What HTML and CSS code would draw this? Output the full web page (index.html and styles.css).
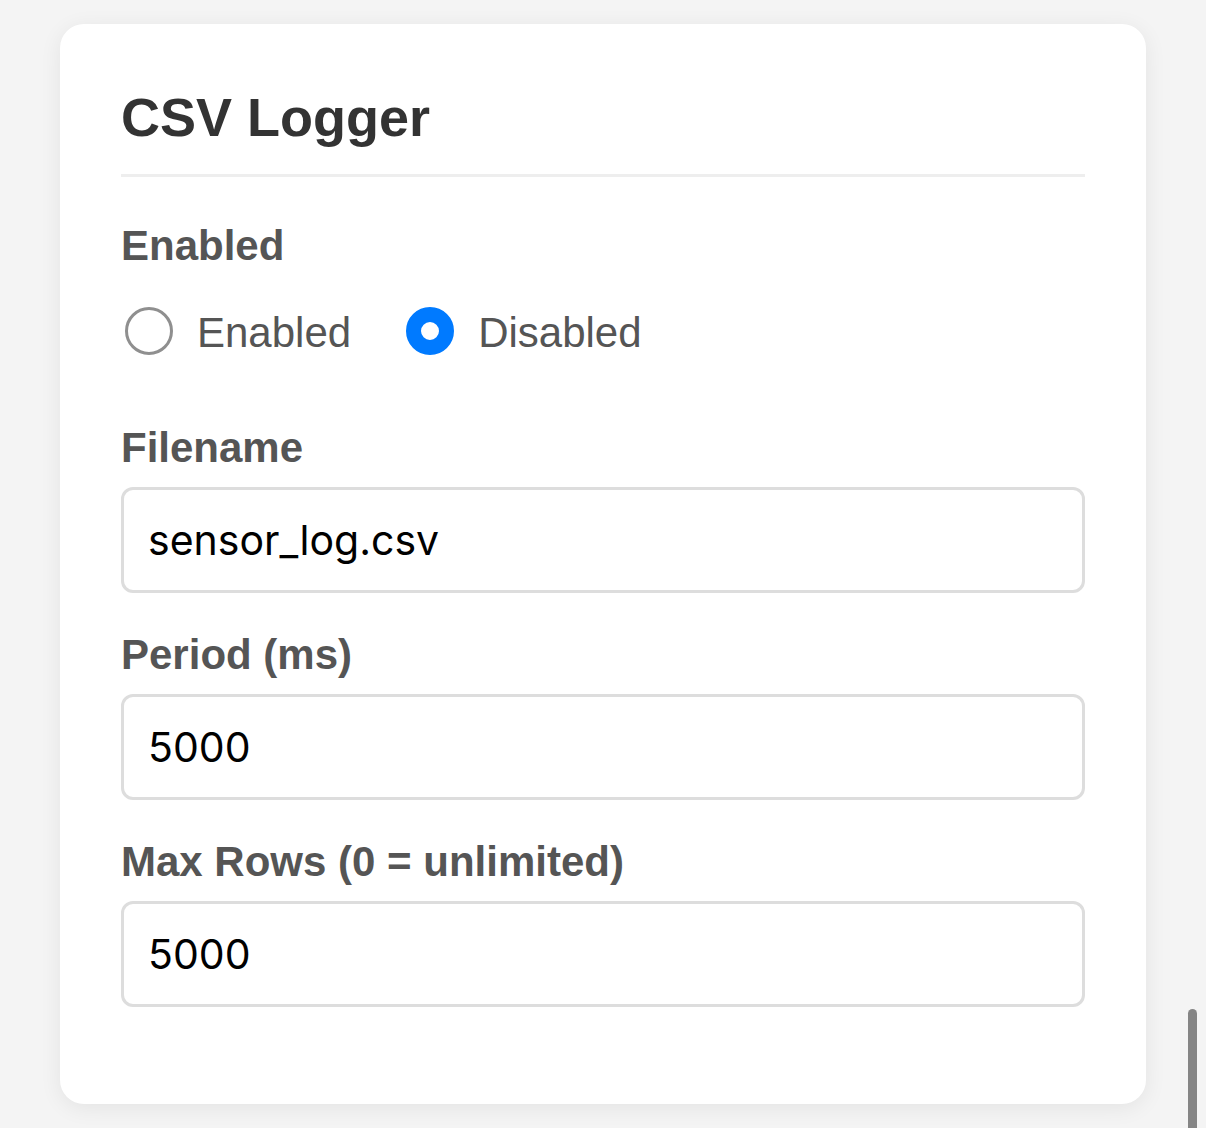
FILE: index.html
```html
<!DOCTYPE html>
<html lang="en">
<head>
<meta charset="utf-8">
<title>CSV Logger</title>
<link rel="stylesheet" href="styles.css">
</head>
<body>
<main class="card">
  <h2 class="card-title">CSV Logger</h2>

  <div class="field field-radio">
    <div class="field-label">Enabled</div>
    <div class="radio-row">
      <label class="radio-item">
        <input type="radio" name="enabled" class="radio" value="1">
        <span class="radio-text">Enabled</span>
      </label>
      <label class="radio-item">
        <input type="radio" name="enabled" class="radio" value="0" checked>
        <span class="radio-text">Disabled</span>
      </label>
    </div>
  </div>

  <div class="field">
    <label class="field-label" for="filename">Filename</label>
    <input class="text-input" id="filename" type="text" value="sensor_log.csv">
  </div>

  <div class="field">
    <label class="field-label" for="period">Period (ms)</label>
    <input class="text-input" id="period" type="text" value="5000">
  </div>

  <div class="field">
    <label class="field-label" for="maxrows">Max Rows (0 = unlimited)</label>
    <input class="text-input" id="maxrows" type="text" value="5000">
  </div>
</main>
<div class="scroll-indicator"></div>
</body>
</html>
```

FILE: styles.css
```css
html, body {
  margin: 0;
  padding: 0;
}

body {
  background: #f4f4f4;
  font-family: "Liberation Sans", Arial, sans-serif;
  overflow: hidden;
  height: 1128px;
}

.card {
  margin: 24px 60px 0;
  box-sizing: border-box;
  height: 1080px;
  padding: 61px 61px 0;
  background: #ffffff;
  border-radius: 24px;
  box-shadow: 0 4px 22px rgba(0, 0, 0, 0.07);
}

.card-title {
  margin: 0;
  font-size: 54px;
  line-height: 64px;
  font-weight: 700;
  color: #333333;
  padding-bottom: 25px;
  border-bottom: 3px solid #eeeeee;
}

.field {
  display: flex;
  flex-direction: column;
  margin-top: 38px;
}

.field-radio {
  margin-top: 45px;
  padding-bottom: 29px;
}

.field-label {
  display: block;
  font-size: 42px;
  line-height: 48px;
  font-weight: 700;
  color: #555555;
  margin-bottom: 15px;
}

.field-radio .field-label {
  margin-bottom: 39px;
}

.radio-row {
  display: flex;
  align-items: flex-start;
  gap: 51px;
}

.radio-item {
  display: flex;
  align-items: flex-start;
  gap: 24px;
}

.radio {
  appearance: none;
  -webkit-appearance: none;
  box-sizing: border-box;
  width: 48px;
  height: 48px;
  margin: -2px 0 0 4px;
  border-radius: 50%;
  border: 3px solid #8f8f8f;
  background: #ffffff;
}

.radio:checked {
  border: 15px solid #007aff;
}

.radio-text {
  font-size: 42px;
  line-height: 48px;
  color: #555555;
}

.text-input {
  box-sizing: border-box;
  width: 100%;
  height: 106px;
  margin: 0;
  padding: 0 24px;
  border: 3px solid #dddddd;
  border-radius: 12px;
  background: #ffffff;
  font-family: Inter, "Liberation Sans", sans-serif;
  font-size: 41px;
  color: #000000;
  outline: none;
}

.scroll-indicator {
  position: absolute;
  left: 1188px;
  top: 1009px;
  width: 9px;
  height: 130px;
  border-radius: 5px;
  background: #858585;
}
```
